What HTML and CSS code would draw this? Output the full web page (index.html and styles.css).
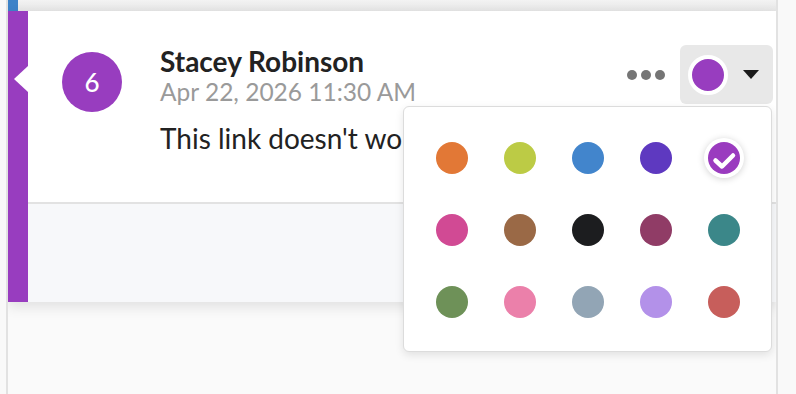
FILE: index.html
```html
<!DOCTYPE html>
<html>
  <head>
    <title>Comment</title>
    <link rel="stylesheet" href="styles.css">
  </head>
  <body>
    <div class="frame">
      <div class="prev-card"><div class="prev-bar"></div></div>

      <div class="card">
        <div class="card-bar"></div>
        <div class="card-main">
          <div class="card-body">
            <div class="avatar">6</div>
            <div class="comment">
              <div class="author">Stacey Robinson</div>
              <div class="date">Apr 22, 2026 11:30 AM</div>
              <p class="text">This link doesn't work for me anymore.</p>
            </div>
            <div class="actions">
              <div class="more"><span></span><span></span><span></span></div>
              <div class="color-btn">
                <span class="current"></span>
                <span class="caret"></span>
              </div>

              <div class="palette">
                <span class="swatch" style="background:#e27836"></span>
                <span class="swatch" style="background:#bccb45"></span>
                <span class="swatch" style="background:#4285cc"></span>
                <span class="swatch" style="background:#5e39c0"></span>
                <span class="swatch selected" style="background:#9a3bbf">
                  <svg viewBox="0 0 32 32" width="32" height="32"><path d="M7.5 18.5 L14 24.5 L25 13.5" fill="none" stroke="#fff" stroke-width="4.5" stroke-linecap="round" stroke-linejoin="round"/></svg>
                </span>
                <span class="swatch" style="background:#d14a94"></span>
                <span class="swatch" style="background:#9a6946"></span>
                <span class="swatch" style="background:#1c1d1f"></span>
                <span class="swatch" style="background:#903c66"></span>
                <span class="swatch" style="background:#3b8789"></span>
                <span class="swatch" style="background:#6e9158"></span>
                <span class="swatch" style="background:#eb80aa"></span>
                <span class="swatch" style="background:#92a5b5"></span>
                <span class="swatch" style="background:#b391e9"></span>
                <span class="swatch" style="background:#c75e5b"></span>
              </div>
            </div>
          </div>
          <div class="card-footer"></div>
        </div>
      </div>
    </div>
  </body>
</html>
```

FILE: styles.css
```css
body {
  margin: 0;
  background-color: #f9f9f9;
  font-family: Lato, "Open Sans", sans-serif;
}

.frame {
  margin-left: 6px;
  width: 768px;
  height: 394px;
  border-left: 2px solid #e2e2e2;
  border-right: 2px solid #e2e2e2;
  background-color: #fafafa;
  overflow: hidden;
}

.prev-card {
  height: 11px;
  background: linear-gradient(#f3f3f3, #e5e5e5);
}

.prev-bar {
  width: 10px;
  height: 11px;
  background-color: #3d82c8;
}

.card {
  display: flex;
  height: 291px;
  box-shadow: 0 5px 12px rgba(0, 0, 0, 0.1);
}

.card-bar {
  position: relative;
  flex-shrink: 0;
  width: 20px;
  background-color: #983dbf;
}

.card-bar::after {
  content: "";
  position: absolute;
  top: 55px;
  right: 0;
  border-top: 13px solid transparent;
  border-bottom: 13px solid transparent;
  border-right: 14px solid #fff;
}

.card-main {
  flex: 1;
  min-width: 0;
  display: flex;
  flex-direction: column;
}

.card-body {
  display: flex;
  height: 191px;
  padding-left: 34px;
  background-color: #fff;
  box-sizing: border-box;
}

.avatar {
  flex-shrink: 0;
  width: 60px;
  height: 60px;
  margin-top: 41px;
  border-radius: 50%;
  background-color: #983dbf;
  color: #fff;
  font-size: 26px;
  font-weight: 500;
  line-height: 60px;
  text-align: center;
}

.comment {
  flex: 1;
  min-width: 0;
  margin-left: 38px;
  padding-top: 35px;
  color: #222;
  white-space: nowrap;
}

.author {
  font-size: 28px;
  font-weight: 700;
  line-height: 30px;
}

.date {
  font-size: 24.5px;
  line-height: 32px;
  color: #9a9a9a;
}

.text {
  margin: 14px 0 0;
  font-size: 28px;
  line-height: 32px;
}

.actions {
  position: relative;
  flex-shrink: 0;
  display: flex;
  align-items: center;
  align-self: flex-start;
  margin-top: 34px;
  margin-right: 3px;
}

.more {
  display: flex;
  gap: 4px;
  margin-right: 15px;
}

.more span {
  width: 10px;
  height: 10px;
  border-radius: 50%;
  background-color: #757575;
}

.color-btn {
  display: flex;
  align-items: center;
  width: 93px;
  height: 59px;
  padding-left: 8px;
  border-radius: 6px;
  background-color: #e8e8e8;
  box-sizing: border-box;
}

.current {
  width: 32px;
  height: 32px;
  border: 4px solid #fff;
  border-radius: 50%;
  background-color: #983dbf;
}

.caret {
  margin-left: 15px;
  border-left: 8.5px solid transparent;
  border-right: 8.5px solid transparent;
  border-top: 9px solid #1a1a1a;
}

.palette {
  position: absolute;
  top: 61px;
  right: 1px;
  display: grid;
  grid-template-columns: repeat(5, 32px);
  align-content: start;
  column-gap: 36px;
  row-gap: 40px;
  width: 369px;
  height: 246px;
  padding: 35px 0 0 32px;
  border: 1px solid #dcdcdc;
  border-radius: 6px;
  background-color: #fff;
  box-shadow: 0 3px 8px rgba(0, 0, 0, 0.1);
  box-sizing: border-box;
}

.swatch {
  width: 32px;
  height: 32px;
  border-radius: 50%;
}

.swatch.selected {
  box-shadow: 0 0 0 4px #fff, 0 1px 7px 4px rgba(0, 0, 0, 0.18);
}

.swatch svg {
  display: block;
}

.card-footer {
  flex: 1;
  border-top: 2px solid #e2e2e2;
  background-color: #f7f8fa;
}
```
